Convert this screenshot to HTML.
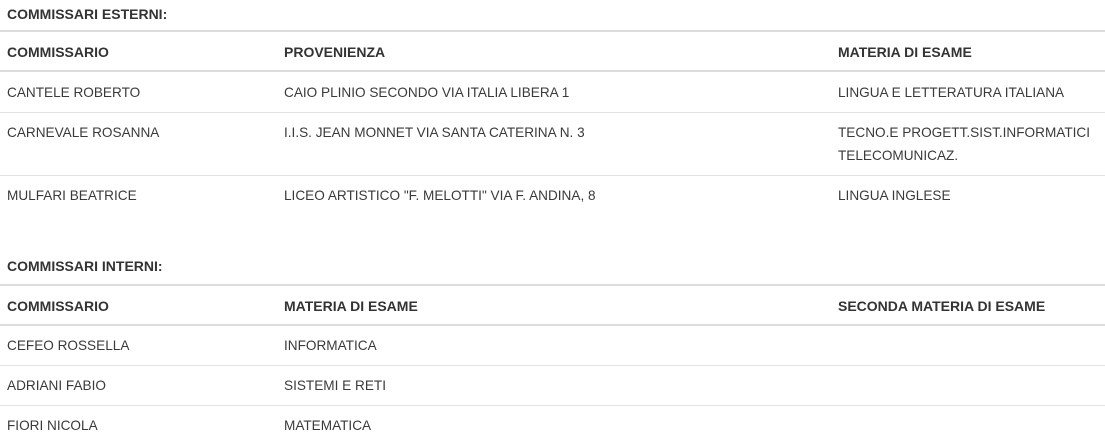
<!DOCTYPE html>
<html><head><meta charset="utf-8"><style>
body{margin:0;width:1105px;height:443px;background:#fff;position:relative;overflow:hidden;font-family:"Liberation Sans",sans-serif;font-size:13.6px;color:#3a3a3a}
.t{position:absolute;white-space:nowrap;line-height:16px}
.b{font-weight:bold;color:#333;font-size:14px}
.l{position:absolute;left:0;width:1105px;height:1px;background:#e3e3e3}
.L{position:absolute;left:0;width:1105px;height:2px;background:#dcdcdc}
</style></head><body>
<div class="t b" style="left:7px;top:6px">COMMISSARI ESTERNI:</div>
<div class="L" style="top:30px"></div>
<div class="t b" style="left:7px;top:44px">COMMISSARIO</div>
<div class="t b" style="left:284px;top:44px">PROVENIENZA</div>
<div class="t b" style="left:838px;top:44px">MATERIA DI ESAME</div>
<div class="L" style="top:70px"></div>
<div class="t" style="left:7px;top:85px">CANTELE ROBERTO</div>
<div class="t" style="left:284px;top:85px">CAIO PLINIO SECONDO VIA ITALIA LIBERA 1</div>
<div class="t" style="left:838px;top:85px">LINGUA E LETTERATURA ITALIANA</div>
<div class="l" style="top:112px"></div>
<div class="t" style="left:7px;top:125px">CARNEVALE ROSANNA</div>
<div class="t" style="left:284px;top:125px">I.I.S. JEAN MONNET VIA SANTA CATERINA N. 3</div>
<div class="t" style="left:838px;top:125px">TECNO.E PROGETT.SIST.INFORMATICI</div>
<div class="t" style="left:838px;top:148px">TELECOMUNICAZ.</div>
<div class="l" style="top:175px"></div>
<div class="t" style="left:7px;top:188px">MULFARI BEATRICE</div>
<div class="t" style="left:284px;top:188px">LICEO ARTISTICO "F. MELOTTI" VIA F. ANDINA, 8</div>
<div class="t" style="left:838px;top:188px">LINGUA INGLESE</div>
<div class="t b" style="left:7px;top:258px">COMMISSARI INTERNI:</div>
<div class="L" style="top:284px"></div>
<div class="t b" style="left:7px;top:298px">COMMISSARIO</div>
<div class="t b" style="left:284px;top:298px">MATERIA DI ESAME</div>
<div class="t b" style="left:838px;top:298px">SECONDA MATERIA DI ESAME</div>
<div class="L" style="top:324px"></div>
<div class="t" style="left:7px;top:338px">CEFEO ROSSELLA</div>
<div class="t" style="left:284px;top:338px">INFORMATICA</div>
<div class="l" style="top:365px"></div>
<div class="t" style="left:7px;top:378px">ADRIANI FABIO</div>
<div class="t" style="left:284px;top:378px">SISTEMI E RETI</div>
<div class="l" style="top:405px"></div>
<div class="t" style="left:7px;top:418px">FIORI NICOLA</div>
<div class="t" style="left:284px;top:418px">MATEMATICA</div>
</body></html>
